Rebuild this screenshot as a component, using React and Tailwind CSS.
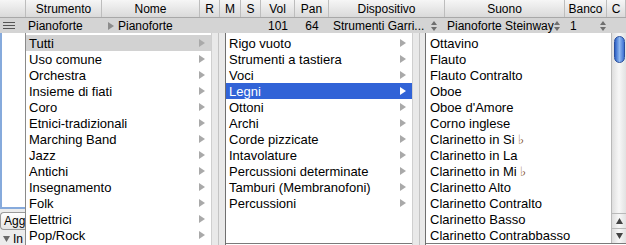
import React from 'react';

const headerCols = [
  { label: '', w: 'w-[26px]' },
  { label: 'Strumento', w: 'w-[76px]' },
  { label: 'Nome', w: 'w-[98px]' },
  { label: 'R', w: 'w-[20px]' },
  { label: 'M', w: 'w-[21px]' },
  { label: 'S', w: 'w-[20px]' },
  { label: 'Vol', w: 'w-[34px]' },
  { label: 'Pan', w: 'w-[34px]' },
  { label: 'Dispositivo', w: 'w-[116px]' },
  { label: 'Suono', w: 'w-[120px]' },
  { label: 'Banco', w: 'w-[42px]' },
  { label: 'C', w: 'flex-1' },
];

const families = [
  'Tutti', 'Uso comune', 'Orchestra', 'Insieme di fiati', 'Coro', 'Etnici-tradizionali',
  'Marching Band', 'Jazz', 'Antichi', 'Insegnamento', 'Folk', 'Elettrici', 'Pop/Rock',
];

const groups = [
  'Rigo vuoto', 'Strumenti a tastiera', 'Voci', 'Legni', 'Ottoni', 'Archi', 'Corde pizzicate',
  'Intavolature', 'Percussioni determinate', 'Tamburi (Membranofoni)', 'Percussioni',
];

const instruments = [
  'Ottavino', 'Flauto', 'Flauto Contralto', 'Oboe', "Oboe d'Amore", 'Corno inglese',
  'Clarinetto in Si|flat', 'Clarinetto in La', 'Clarinetto in Mi|flat', 'Clarinetto Alto',
  'Clarinetto Contralto', 'Clarinetto Basso', 'Clarinetto Contrabbasso',
];

function Arrow({ white }) {
  return (
    <svg width="6" height="8" viewBox="0 0 6 8" className="shrink-0">
      <path d="M0 0 L6 4 L0 8 Z" fill={white ? '#ffffff' : '#a9a9a9'} />
    </svg>
  );
}

function Stepper() {
  return (
    <svg width="6" height="10" viewBox="0 0 6 10" className="shrink-0">
      <path d="M0 4 L3 0 L6 4 Z" fill="#6e6e6e" />
      <path d="M0 6 L3 10 L6 6 Z" fill="#6e6e6e" />
    </svg>
  );
}

function InstrumentLabel({ text }) {
  if (text.endsWith('|flat')) {
    return (
      <span>
        {text.replace('|flat', '')} <span className="text-[#7a4a1c]">♭</span>
      </span>
    );
  }
  return <span>{text}</span>;
}

export default function App() {
  return (
    <div className="w-[626px] h-[245px] overflow-hidden bg-white text-black font-['Liberation_Sans',Arial,sans-serif] flex flex-col">
      {/* column headers */}
      <div className="h-[18px] flex bg-linear-to-b from-[#f6f6f6] to-[#dadada] border-b border-[#a8a8a8] text-[12px]">
        {headerCols.map((c, i) => (
          <div key={i} className={`${c.w} h-full flex items-center justify-center border-r border-[#bdbdbd] shrink-0`}>
            {c.label}
          </div>
        ))}
      </div>

      {/* selected staff row */}
      <div className="h-[16px] flex items-center bg-[#d4d4d4] text-[12px] leading-none whitespace-nowrap">
        <div className="w-[26px] shrink-0 flex flex-col items-start gap-[2px] pl-[3px]">
          <div className="w-[12px] h-[1px] bg-[#555]" />
          <div className="w-[12px] h-[1px] bg-[#555]" />
          <div className="w-[12px] h-[1px] bg-[#555]" />
        </div>
        <div className="w-[76px] shrink-0 pl-[2px]">Pianoforte</div>
        <div className="w-[98px] shrink-0 flex items-center gap-[4px] pl-[6px]">
          <svg width="6" height="8" viewBox="0 0 6 8">
            <path d="M0 0 L6 4 L0 8 Z" fill="#8c8c8c" />
          </svg>
          <span>Pianoforte</span>
        </div>
        <div className="w-[61px] shrink-0" />
        <div className="w-[34px] shrink-0 text-center">101</div>
        <div className="w-[34px] shrink-0 text-center">64</div>
        <div className="w-[116px] shrink-0 flex items-center justify-between pl-[4px] pr-[8px]">
          <span>Strumenti Garri...</span>
          <Stepper />
        </div>
        <div className="w-[120px] shrink-0 flex items-center justify-between pl-[2px] pr-[7px]">
          <span>Pianoforte Steinway</span>
          <Stepper />
        </div>
        <div className="w-[42px] shrink-0 flex items-center justify-between pl-[5px] pr-[1px]">
          <span>1</span>
          <Stepper />
        </div>
      </div>

      {/* browser area */}
      <div className="flex-1 flex text-[13px] leading-none whitespace-nowrap">
        {/* left strip under the menus */}
        <div className="w-[25px] shrink-0 flex flex-col bg-[#ececec] overflow-hidden">
          <div className="h-[176px] bg-white border-l-2 border-b-2 border-[#86aadc]" />
          <div className="mt-[3px] h-[18px] bg-linear-to-b from-white to-[#e4e4e4] border border-r-0 border-[#9a9a9a] rounded-l-[4px] flex items-center pl-[3px] text-[12px]">
            Agg
          </div>
          <div className="mt-[3px] flex items-center gap-[3px] pl-[3px] text-[12px]">
            <svg width="7" height="6" viewBox="0 0 7 6" className="shrink-0">
              <path d="M0 0 L7 0 L3.5 6 Z" fill="#6a6a6a" />
            </svg>
            <span>In</span>
          </div>
        </div>

        {/* families */}
        <div className="w-[187px] shrink-0 bg-white border-l border-[#8a8a8a] border-r border-r-[#cfcfcf] pt-[2px]">
          {families.map((f, i) => (
            <div
              key={f}
              className={`h-[16px] flex items-center justify-between pl-[3px] pr-[6px] ${i === 0 ? 'bg-[#d2d2d2]' : ''}`}
            >
              <span>{f}</span>
              <Arrow />
            </div>
          ))}
        </div>

        <div className="w-[14px] shrink-0 bg-[#e9e9e9] border-r border-[#6f6f6f] flex justify-center">
          <div className="w-[1px] h-full bg-[#c4c4c4]" />
        </div>

        {/* groups */}
        <div className="w-[186px] shrink-0 bg-white border-b border-[#7a7a7a] mb-[1px] pt-[2px]">
          {groups.map((g) => (
            <div
              key={g}
              className={`h-[16px] flex items-center justify-between pl-[3px] pr-[6px] ${g === 'Legni' ? 'bg-[#3163d7] text-white' : ''}`}
            >
              <span>{g}</span>
              <Arrow white={g === 'Legni'} />
            </div>
          ))}
        </div>

        <div className="w-[14px] shrink-0 bg-[#e9e9e9] border-l border-[#cfcfcf] border-r border-r-[#6f6f6f] flex justify-center">
          <div className="w-[1px] h-full bg-[#c4c4c4]" />
        </div>

        {/* instruments */}
        <div className="flex-1 flex bg-white border-b border-[#7a7a7a] mb-[1px]">
          <div className="flex-1 pt-[2px] pl-[4px]">
            {instruments.map((s) => (
              <div key={s} className="h-[16px] flex items-center">
                <InstrumentLabel text={s} />
              </div>
            ))}
          </div>
          <div className="w-[15px] flex flex-col border-l border-[#b9b9b9] bg-linear-to-r from-[#dedede] via-[#f7f7f7] to-[#e2e2e2]">
            <div className="flex-1 pt-[3px] flex justify-center">
              <div className="w-[11px] h-[27px] rounded-full bg-linear-to-r from-[#2d5fc4] via-[#8fb8f0] to-[#3e70d2] border border-[#2a4f9c]" />
            </div>
            <div className="h-[15px] flex items-center justify-center border-t border-[#b9b9b9]">
              <svg width="7" height="6" viewBox="0 0 7 6">
                <path d="M0 6 L3.5 0 L7 6 Z" fill="#444" />
              </svg>
            </div>
            <div className="h-[15px] flex items-center justify-center border-t border-[#b9b9b9]">
              <svg width="7" height="6" viewBox="0 0 7 6">
                <path d="M0 0 L7 0 L3.5 6 Z" fill="#444" />
              </svg>
            </div>
          </div>
        </div>
      </div>
    </div>
  );
}
